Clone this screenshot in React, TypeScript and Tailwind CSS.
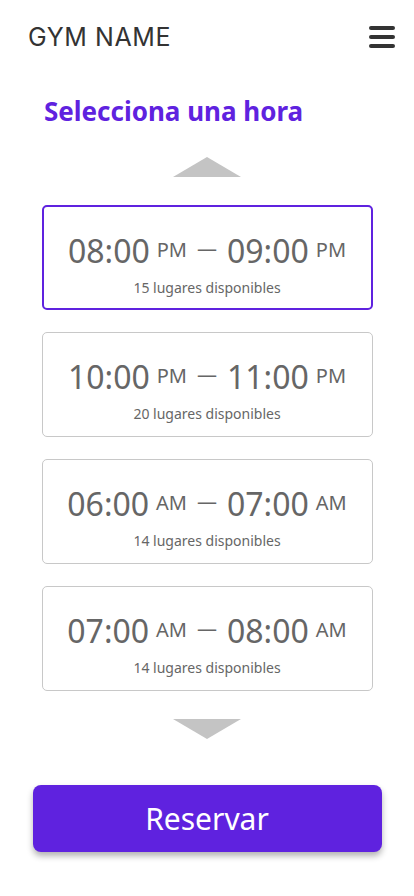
import React, { useState } from 'react';

interface Slot {
  start: string;
  startPeriod: string;
  end: string;
  endPeriod: string;
  spots: number;
}

const slots: Slot[] = [
  { start: '08:00', startPeriod: 'PM', end: '09:00', endPeriod: 'PM', spots: 15 },
  { start: '10:00', startPeriod: 'PM', end: '11:00', endPeriod: 'PM', spots: 20 },
  { start: '06:00', startPeriod: 'AM', end: '07:00', endPeriod: 'AM', spots: 14 },
  { start: '07:00', startPeriod: 'AM', end: '08:00', endPeriod: 'AM', spots: 14 },
];

function Triangle({ down = false }: { down?: boolean }) {
  return (
    <svg width="68" height="20" viewBox="0 0 68 20" className="block">
      {down ? (
        <polygon points="0,0 68,0 34,20" fill="#c4c4c4" />
      ) : (
        <polygon points="34,0 68,20 0,20" fill="#c4c4c4" />
      )}
    </svg>
  );
}

export default function App() {
  const [selected, setSelected] = useState(0);

  return (
    <div className="w-[414px] h-[896px] bg-white flex flex-col font-['Noto_Sans',sans-serif] overflow-hidden">
      {/* Header */}
      <div className="flex items-center justify-between pl-[28px] pr-[19px] pt-[18px] h-[56px]">
        <span className="font-['Inter',sans-serif] text-[25px] leading-none text-[#333333] tracking-[0.6px]">
          GYM NAME
        </span>
        <button className="flex flex-col gap-[5px] w-[26px]">
          <span className="block h-[4px] rounded-full bg-[#333333]" />
          <span className="block h-[4px] rounded-full bg-[#333333]" />
          <span className="block h-[4px] rounded-full bg-[#333333]" />
        </button>
      </div>

      {/* Title */}
      <h1 className="mt-[38px] pl-[44px] text-[26px] leading-[34px] font-bold text-[#5f22df]">
        Selecciona una hora
      </h1>

      {/* Up arrow */}
      <div className="flex justify-center mt-[29px]">
        <Triangle />
      </div>

      {/* Slots */}
      <div className="mt-[28px] flex flex-col gap-[22px] items-center">
        {slots.map((slot, i) => (
          <button
            key={i}
            onClick={() => setSelected(i)}
            className={`w-[331px] h-[105px] rounded-[5px] bg-white flex flex-col items-center pt-[24px] ${
              i === selected ? 'border-2 border-[#5f22df]' : 'border border-[#c8c8c8]'
            }`}
          >
            <div className="flex items-center text-[#666666] h-[40px]">
              <span className="text-[32px] leading-none">{slot.start}</span>
              <span className="text-[20px] leading-none ml-[7px] mt-[-2px]">{slot.startPeriod}</span>
              <span className="text-[20px] leading-none mx-[10px] mt-[-4px]">—</span>
              <span className="text-[32px] leading-none">{slot.end}</span>
              <span className="text-[20px] leading-none ml-[7px] mt-[-2px]">{slot.endPeriod}</span>
            </div>
            <span className="mt-[7px] text-[14px] leading-[19px] text-[#666666]">
              {slot.spots} lugares disponibles
            </span>
          </button>
        ))}
      </div>

      {/* Down arrow */}
      <div className="flex justify-center mt-[28px]">
        <Triangle down />
      </div>

      {/* Reserve button */}
      <div className="mt-[46px] flex justify-center">
        <button className="w-[349px] h-[67px] rounded-[8px] bg-[#5f22df] text-white text-[30px] shadow-[0_4px_6px_rgba(0,0,0,0.3)]">
          Reservar
        </button>
      </div>
    </div>
  );
}
